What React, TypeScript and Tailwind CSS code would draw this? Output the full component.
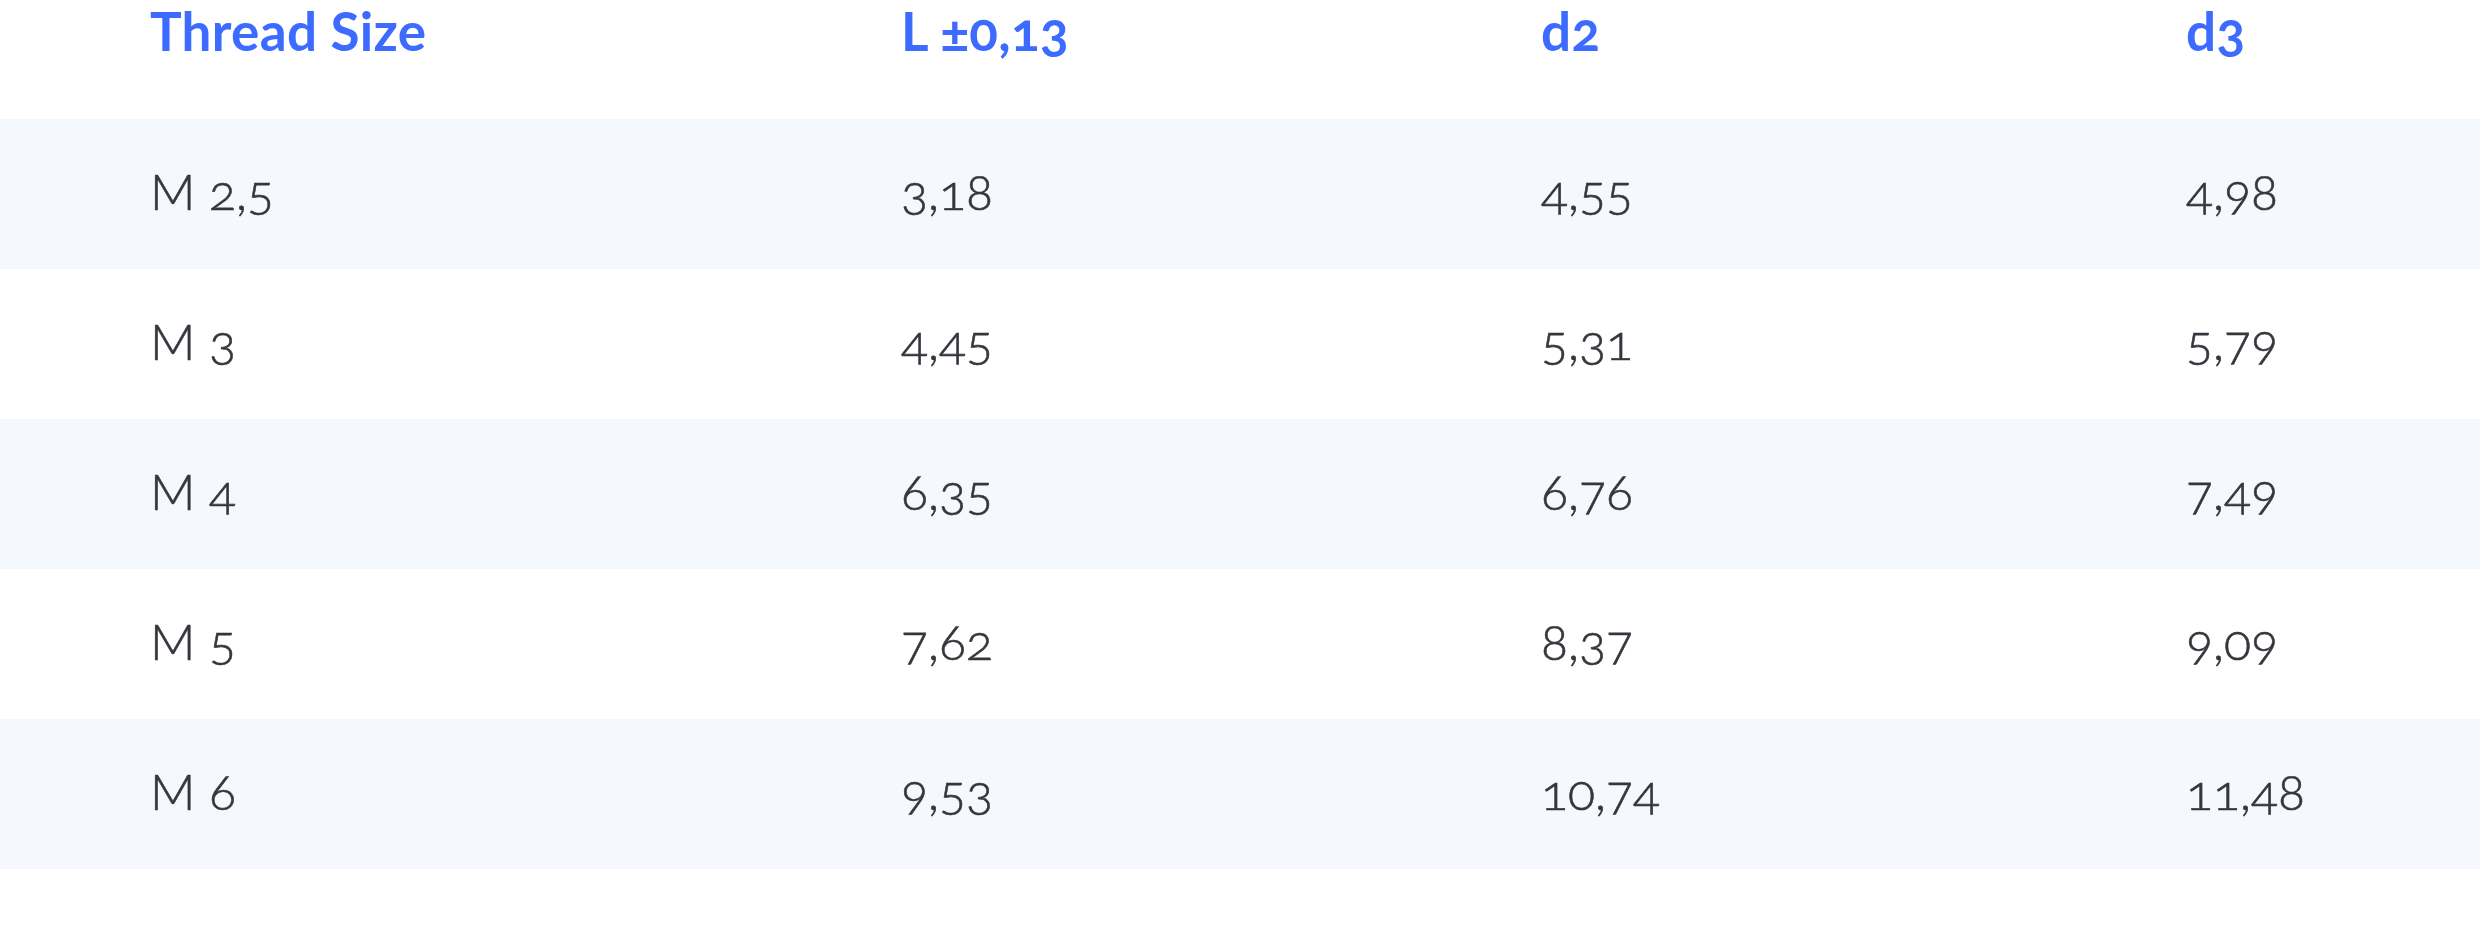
const headers = ["Thread Size", "L ±0,13", "d2", "d3"];

const rows = [
  ["M 2,5", "3,18", "4,55", "4,98"],
  ["M 3", "4,45", "5,31", "5,79"],
  ["M 4", "6,35", "6,76", "7,49"],
  ["M 5", "7,62", "8,37", "9,09"],
  ["M 6", "9,53", "10,74", "11,48"],
];

const cols = "grid grid-cols-[751px_640px_645px_1fr]";

export default function App() {
  return (
    <div className="w-[2480px] h-[925px] bg-white font-['Lato','Liberation_Sans',sans-serif]">
      <div className={`${cols} h-[119px] items-start`}>
        {headers.map((h) => (
          <div key={h} className="pl-[150px] text-[53px] leading-[62px] font-bold tracking-[0.3px] text-[#3d6bff] oldstyle-nums">
            {h}
          </div>
        ))}
      </div>
      {rows.map((r, i) => (
        <div key={i} className={`${cols} h-[150px] items-center pb-[6px] ${i % 2 === 0 ? "bg-[#f5f8fd]" : "bg-white"}`}>
          {r.map((c, j) => (
            <div key={j} className="pl-[150px] text-[50px] leading-[60px] font-light [-webkit-text-stroke:0.6px_#36363e] text-[#36363e] oldstyle-nums">
              {c}
            </div>
          ))}
        </div>
      ))}
    </div>
  );
}
